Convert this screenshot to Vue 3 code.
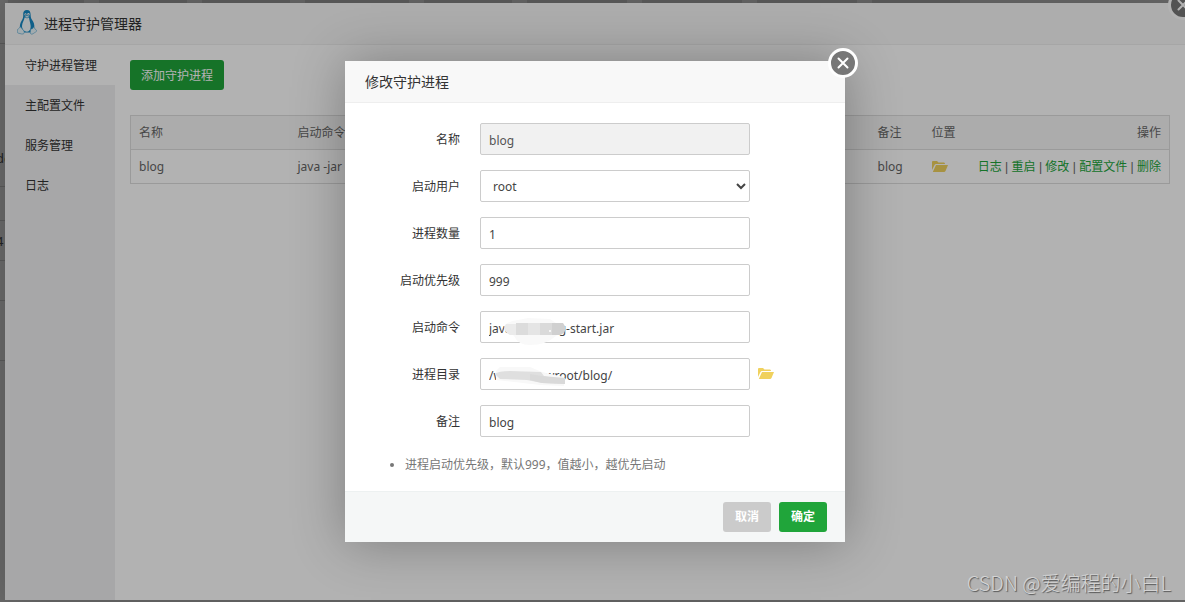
<script setup>
import { ref } from 'vue'

const tabs = ['t1', 't2', 't2', 't4', 't2', 't3', 't3', 't3', 't2']
const menu = ['守护进程管理', '主配置文件', '服务管理', '日志']
const active = ref(0)
const actions = ['日志', '重启', '修改', '配置文件', '删除']

const form = ref({
  name: 'blog',
  user: 'root',
  count: '1',
  priority: '999',
  command: 'java -jar /blog-start.jar',
  path: '/www/wwwroot/blog/',
  remark: 'blog'
})

const fields = [
  { key: 'name', label: '名称', disabled: true },
  { key: 'user', label: '启动用户', select: true },
  { key: 'count', label: '进程数量' },
  { key: 'priority', label: '启动优先级' },
  { key: 'command', label: '启动命令' },
  { key: 'path', label: '进程目录' },
  { key: 'remark', label: '备注' }
]
</script>

<template>
  <div class="screen">
    <div class="desk" aria-hidden="true">
      <div class="tabs"><i v-for="(t, i) in tabs" :key="i" :class="t"></i></div>
      <div class="rail">
        <span class="r1"></span>
        <span class="r2">de</span>
        <span class="r3"></span>
        <span class="r4">4</span>
        <span class="r4"></span>
        <span class="r5"></span>
      </div>
    </div>

    <main class="window">
      <header class="window-head">
        <svg class="tux" viewBox="0 0 20 25" width="20" height="25">
          <path d="M10 0C7.2 0 6 2 6.2 4.600C6.400 7.200 6 8.600 4.600 10.800C3.200 13 2.600 15.500 3 18L6 22.500H14L17.300 18C17.700 14.500 16.600 12 15 9.800C13.700 8 13.700 6.500 13.600 4.200C13.500 1.600 12.400 0 10 0Z" fill="#1689c4" />
          <path d="M7.600 7.500C7.200 10 5.200 12.500 5 16C5 19.500 7.300 21.700 10 21.700C12.500 21.700 14 19 13.600 15.600C13.300 12.500 12.300 10.200 12 7.400Z" fill="#f4fafc" />
          <ellipse cx="8.500" cy="4.500" rx="1" ry="1.300" fill="#fff" />
          <ellipse cx="11.400" cy="4.500" rx="1.200" ry="1.400" fill="#fff" />
          <circle cx="8.700" cy="4.700" r=".5" fill="#17618a" />
          <circle cx="11.200" cy="4.700" r=".5" fill="#17618a" />
          <path d="M7.500 6.300L10 5.300L12.600 6.300L10 8.200Z" fill="#d9eef7" stroke="#1689c4" stroke-width=".5" />
          <path d="M3.300 16.700L6.800 20.800C8 22.800 6.800 24.500 4.800 24L.8 23C-.2 22.600.6 21.300.4 20.200C.2 18.800 2.300 19 3.300 16.700Z" fill="#e9f5fa" stroke="#4aa3cf" stroke-width=".6" />
          <path d="M16.500 17L18.200 19L19.600 20.600C20.100 21.500 18 22.300 16.200 23.600C14.800 24.600 13.200 24.200 13.300 22.500L13.600 18.500C14.300 19.500 15.800 19.200 16.500 17Z" fill="#e9f5fa" stroke="#4aa3cf" stroke-width=".6" />
        </svg>
        <h1>进程守护管理器</h1>
      </header>
      <button class="close" type="button" aria-label="关闭">
        <svg viewBox="0 0 24 24" width="24" height="24"><path d="M7.500 7.500L16.500 16.500M16.500 7.500L7.500 16.500" /></svg>
      </button>

      <div class="window-body">
        <nav class="side">
          <button v-for="(m, i) in menu" :key="m" type="button" :class="{ on: active === i }" @click="active = i">{{ m }}</button>
        </nav>
        <section class="content">
          <button class="btn add" type="button">添加守护进程</button>
          <table>
            <colgroup><col class="c-name" /><col /><col class="c-remark" /><col class="c-place" /><col class="c-act" /></colgroup>
            <thead>
              <tr><th>名称</th><th>启动命令</th><th>备注</th><th>位置</th><th class="right">操作</th></tr>
            </thead>
            <tbody>
              <tr>
                <td>blog</td>
                <td>java -jar</td>
                <td>blog</td>
                <td>
                  <a href="#" class="folder" aria-label="打开目录">
                    <svg viewBox="0 0 16 12" width="16" height="12"><path d="M0 9V1Q0 0 1 0H5L6.500 1.500H12Q13 1.500 13 3H4Q3 3 2.500 4Z" /><path d="M4 4H16L13.500 10Q13 11 12 11H.8Z" /></svg>
                  </a>
                </td>
                <td class="right">
                  <template v-for="(a, i) in actions" :key="a"><span v-if="i" class="sep"> | </span><a href="#">{{ a }}</a></template>
                </td>
              </tr>
            </tbody>
          </table>
        </section>
      </div>
    </main>

    <div class="layer">
      <form class="modal" role="dialog" aria-labelledby="modal-title" @submit.prevent>
        <h2 id="modal-title">修改守护进程</h2>
        <button class="close" type="button" aria-label="关闭">
          <svg viewBox="0 0 24 24" width="24" height="24"><path d="M7.500 7.500L16.500 16.500M16.500 7.500L7.500 16.500" /></svg>
        </button>
        <div class="fields">
          <div v-for="f in fields" :key="f.key" class="row">
            <label :for="f.key">{{ f.label }}</label>
            <div class="control">
              <select v-if="f.select" :id="f.key" v-model="form[f.key]"><option>root</option></select>
              <input v-else :id="f.key" v-model="form[f.key]" type="text" :disabled="f.disabled" />
              <svg v-if="f.key === 'command'" class="smudge" viewBox="0 0 90 34" width="90" height="34">
                <path d="M24 15Q28 10 38 9L48 7L70 8L76 12L84 16L76 25Q66 34 50 34Q38 34 34 25Z" fill="#f9f9f9" />
                <path d="M26 13H36V24H30Q21 19 26 13Z" fill="#ebebeb" />
                <path d="M36 12H48V24H36Z" fill="#dcdcdc" />
                <path d="M48 12H60V24H48Z" fill="#e5e5e5" />
                <path d="M60 12H72V24H60Z" fill="#dadada" />
                <path d="M72 12H83Q87 17 84 22L80 24H72Z" fill="#d0d0d0" />
                <circle cx="70" cy="20" r="1" fill="#fff" />
              </svg>
              <svg v-if="f.key === 'path'" class="smudge" viewBox="0 0 90 34" width="90" height="34">
                <path d="M16 13L20 9L50 9L62 14L84 19V28L60 27L16 22Z" fill="#f8f8f8" />
                <path d="M15 16Q18 13 30 13L61 14L64 18L73 20H85V26L62 25L47 22L20 21Z" fill="#dfdfdf" />
                <path d="M50 16L62 18L85 20V26L62 25L50 22Z" fill="#d9d9d9" />
              </svg>
            </div>
            <button v-if="f.key === 'path'" type="button" class="folder" aria-label="选择目录">
              <svg viewBox="0 0 16 12" width="16" height="12"><path d="M0 9V1Q0 0 1 0H5L6.500 1.500H12Q13 1.500 13 3H4Q3 3 2.500 4Z" /><path d="M4 4H16L13.500 10Q13 11 12 11H.8Z" /></svg>
            </button>
          </div>
          <ul>
            <li>进程启动优先级，默认999，值越小，越优先启动</li>
          </ul>
        </div>
        <footer>
          <button class="btn cancel" type="button">取消</button>
          <button class="btn ok" type="submit">确定</button>
        </footer>
      </form>
    </div>
    <div class="mark">CSDN @爱编程的小白L</div>
  </div>
</template>

<style>
body { margin: 0; overflow: hidden; }
</style>

<style scoped>
.screen {
  position: relative;
  display: flex;
  height: 100vh;
  box-sizing: border-box;
  padding: 3px 0 2px 5px;
  overflow: hidden;
  font: 12px/20px "Noto Sans", "Noto Sans CJK SC", sans-serif;
  color: #333;
}
.screen *, .screen *::before { box-sizing: border-box; }
button, input, select { font: inherit; color: inherit; }
button { border: 0; padding: 0; cursor: pointer; }
a { color: #20a53a; text-decoration: none; }

.desk { position: absolute; inset: 0; background: #989898; }
.tabs { display: flex; gap: 15px; height: 3px; padding-left: 8px; }
.tabs i { background: #888; }
.t1 { width: 76px; }
.t2 { width: 88px; }
.t3 { width: 100px; }
.t4 { width: 104px; }
.rail { width: 5px; overflow: hidden; font-size: 13px; }
.rail span { display: flex; align-items: center; border-bottom: 1px solid #808080; }
.r1 { height: 41px; }
.r2 { height: 143px; padding-top: 86px; text-indent: -4px; }
.r3 { height: 34px; }
.r4 { height: 40px; text-indent: -4px; }
.r5 { height: 60px; }

.window { position: relative; flex: 1; display: flex; flex-direction: column; background: #fff; box-shadow: 1px 1px 50px rgba(0, 0, 0, .2); }
.window-head { display: flex; gap: 7px; height: 42px; padding: 7px 0 0 12px; background: #f8f8f8; border-bottom: 1px solid #eee; }
h1, h2 { margin: 0; font-size: 14px; font-weight: 400; line-height: 28px; }
.window-body { flex: 1; display: flex; }
.side { width: 110px; background: #f0f0f1; }
.side button { display: block; width: 100%; height: 40px; padding: 2px 0 0 20px; background: none; text-align: left; }
.side .on { background: #fff; }
.content { flex: 1; padding: 15px; }
.btn { height: 30px; border-radius: 3px; background: #20a53a; color: #fff; }
.add { display: block; width: 94px; padding-top: 2px; }
table { width: 100%; margin-top: 25px; border-collapse: collapse; table-layout: fixed; border: 1px solid #ddd; color: #666; }
th, td { height: 34px; padding: 0 8px; border-bottom: 1px solid #ddd; text-align: left; font-weight: 400; white-space: nowrap; }
th { background: #f6f6f6; color: #666; }
.right { text-align: right; }
.sep { font-family: "Liberation Sans", sans-serif; }
.c-name { width: 159px; }
.c-remark { width: 54px; }
.c-place { width: 44px; }
.c-act { width: 202px; }
.folder { background: none; color: #f0d15d; line-height: 0; }
.folder svg { fill: #f0d15d; vertical-align: middle; }

.close {
  position: absolute;
  top: -13px;
  right: -13px;
  width: 30px;
  height: 30px;
  border: 3px solid #fff;
  border-radius: 50%;
  background: #777;
  line-height: 0;
}
.close path { stroke: #fff; stroke-width: 2; stroke-linecap: round; }

.layer {
  position: absolute;
  inset: 0;
  display: flex;
  align-items: center;
  justify-content: center;
  padding: 1px 0 0 5px;
  background: rgba(0, 0, 0, .3);
}
.modal { position: relative; width: 500px; background: #fff; box-shadow: 1px 1px 50px rgba(0, 0, 0, .3); }
h2 { height: 42px; padding-left: 20px; line-height: 42px; background: #f8f8f8; border-bottom: 1px solid #eee; }
.fields { padding: 20px 0 16px; }
.row { display: flex; align-items: center; gap: 8px; margin-bottom: 15px; }
label { width: 115px; margin-right: 12px; padding-top: 2px; text-align: right; }
.control { position: relative; width: 270px; }
input, select { display: block; width: 100%; height: 32px; padding: 0 8px; border: 1px solid #ccc; border-radius: 2px; background: #fff; color: #444; }
input { padding-top: 2px; }
input:disabled { background: #f1f1f1; color: #555; }
.smudge { position: absolute; left: 0; top: 0; }
ul { margin: 0; padding: 3px 0 0 60px; color: #777; }
footer { display: flex; justify-content: flex-end; gap: 8px; padding: 10px 18px; background: #f5f7f7; border-top: 1px solid #edf1f1; }
footer .btn { width: 48px; font-weight: 700; }
.cancel { background: #cbcbcb; }

.mark {
  position: absolute;
  right: 14px;
  bottom: 5px;
  font-size: 20px;
  line-height: 28px;
  font-family: "Noto Sans CJK SC", sans-serif;
  font-weight: 300;
  color: #d4d4d4;
  text-shadow: 1px 1px 1px #555;
}
</style>
